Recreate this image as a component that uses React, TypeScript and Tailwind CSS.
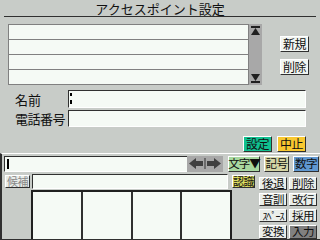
// アクセスポイント設定 画面
import type { ReactNode } from 'react';

const jp = "font-['Noto_Sans_CJK_JP',sans-serif]";

// 3D風のボタン
function Btn({ children, className = '' }: { children: ReactNode; className?: string }) {
  return (
    <div
      className={`flex items-center justify-center whitespace-nowrap border border-t-white border-l-white border-r-[#303030] border-b-[#303030] leading-none tracking-[-0.5px] ${className}`}
    >
      {children}
    </div>
  );
}

function ScrollArrow({ down = false }: { down?: boolean }) {
  return (
    <svg width="13" height="12" viewBox="0 0 13 12">
      {down ? (
        <>
          <polygon points="2,2 11,2 6.5,9" fill="#202020" />
          <rect x="2" y="9" width="9" height="2" fill="#202020" />
        </>
      ) : (
        <>
          <rect x="2" y="1" width="9" height="2" fill="#202020" />
          <polygon points="2,10 11,10 6.5,3" fill="#202020" />
        </>
      )}
    </svg>
  );
}

function CursorArrows() {
  return (
    <svg width="36" height="15" viewBox="0 0 36 15">
      <polygon points="2,7.5 9,2 9,5 16,5 16,10 9,10 9,13" fill="#404040" />
      <rect x="17.5" y="2" width="1" height="11" fill="#303030" />
      <polygon points="34,7.5 27,2 27,5 20,5 20,10 27,10 27,13" fill="#404040" />
    </svg>
  );
}

export default function App() {
  return (
    <div className={`w-[320px] h-[240px] bg-[#c8ccc8] overflow-hidden flex flex-col text-[#101010] ${jp}`}>
      {/* タイトル */}
      <div className="mx-[4px] h-[17px] pt-[1px] border-b border-[#303030] text-center text-[13px] leading-[15px] whitespace-nowrap">
        アクセスポイント設定
      </div>

      {/* リスト + ボタン */}
      <div className="flex mt-[7px] ml-[8px]">
        <div className="w-[241px] h-[61px] border border-[#808080] bg-[#f5faf5] flex flex-col">
          <div className="h-[15px] border-b border-[#808080]" />
          <div className="h-[15px] border-b border-[#808080]" />
          <div className="h-[15px] border-b border-[#808080]" />
          <div className="flex-1" />
        </div>
        <div className="w-[13px] h-[61px] bg-[#a8a8a8] flex flex-col justify-between py-[1px]">
          <ScrollArrow />
          <ScrollArrow down />
        </div>
        <div className="ml-[18px] mt-[12px] flex flex-col gap-[7px]">
          <Btn className="w-[29px] h-[16px] bg-[#f2f6f2] text-[12px]">新規</Btn>
          <Btn className="w-[29px] h-[16px] bg-[#f2f6f2] text-[12px]">削除</Btn>
        </div>
      </div>

      {/* 入力フィールド */}
      <div className="mt-[5px] flex flex-col gap-[2px]">
        <div className="flex items-center h-[18px]">
          <div className="w-[68px] pl-[15px] text-[13px] leading-none">名前</div>
          <div className="w-[238px] h-[18px] bg-[#f5faf5] border border-t-[#303030] border-l-[#303030] border-r-white border-b-white relative">
            <span className="absolute left-[1px] top-[2px] w-[2px] h-[3px] bg-black" />
            <span className="absolute left-[1px] top-[9px] w-[2px] h-[4px] bg-black" />
          </div>
        </div>
        <div className="flex items-center h-[17px]">
          <div className="w-[68px] pl-[15px] text-[13px] leading-none tracking-[-0.5px] whitespace-nowrap">電話番号</div>
          <div className="w-[238px] h-[17px] bg-[#f5faf5] border border-t-[#303030] border-l-[#303030] border-r-white border-b-white" />
        </div>
      </div>

      {/* 設定 / 中止 */}
      <div className="mt-[9px] flex justify-end gap-[5px] pr-[14px]">
        <Btn className="w-[29px] h-[16px] bg-[#10c090] text-[12px]">設定</Btn>
        <Btn className="w-[29px] h-[16px] bg-[#f8c830] text-[12px]">中止</Btn>
      </div>

      {/* 入力パネル */}
      <div className="mt-[1px] flex-1 border-t border-white border-l-2 border-l-[#303030] border-b-2 border-b-[#303030] flex flex-col">
        <div className="flex items-center h-[17px] mt-[1px] ml-[2px]">
          <div className="w-[183px] h-[16px] bg-[#f5faf5] border border-t-[#303030] border-l-[#303030] border-r-0 border-b-white relative">
            <span className="absolute left-[2px] top-[2px] w-[2px] h-[10px] bg-black" />
          </div>
          <div className="w-[36px] h-[16px] bg-[#a8a8a8]">
            <CursorArrows />
          </div>
          <Btn className="ml-[5px] w-[32px] h-[16px] bg-[#a8d8a0] text-[11.5px] tracking-[-1px]">文字▼</Btn>
          <Btn className="ml-[4px] w-[25px] h-[16px] bg-[#d4d4a4] text-[11.5px]">記号</Btn>
          <Btn className="ml-[4px] w-[26px] h-[16px] bg-[#6098d0] text-[11.5px]">数字</Btn>
        </div>

        <div className="flex flex-1">
          {/* 左側 */}
          <div className="flex flex-col w-[257px]">
            <div className="flex items-center h-[17px] mt-[1px]">
              <Btn className="ml-[3px] w-[25px] h-[13px] bg-[#e8ece8] text-[#888] text-[11px]">候補</Btn>
              <div className="ml-[2px] w-[196px] h-[15px] bg-[#f5faf5] border border-t-[#303030] border-l-[#303030] border-r-white border-b-white" />
              <Btn className="ml-[4px] w-[23px] h-[13px] bg-[#dcdc60] text-[11px]">認識</Btn>
            </div>
            <div className="ml-[29px] w-[201px] flex-1 bg-[#f5faf5] border-l-2 border-t-2 border-r-2 border-[#202020] flex">
              <div className="flex-1 border-r-2 border-[#303030]" />
              <div className="flex-1 border-r-2 border-[#303030]" />
              <div className="flex-1 border-r-2 border-[#303030]" />
              <div className="flex-1" />
            </div>
          </div>

          {/* 右側のボタン */}
          <div className="grid grid-cols-[28px_28px] gap-x-[2px] gap-y-[3px] mt-[5px] content-start text-[11.5px]">
            <Btn className="w-[28px] h-[13px] bg-[#eaeeea]">後退</Btn>
            <Btn className="w-[28px] h-[13px] bg-[#eaeeea]">削除</Btn>
            <Btn className="w-[28px] h-[13px] bg-[#eaeeea]">音訓</Btn>
            <Btn className="w-[28px] h-[13px] bg-[#eaeeea]">改行</Btn>
            <Btn className="w-[28px] h-[13px] bg-[#eaeeea] text-[10px] tracking-[-1px]">ｽﾍﾟｰｽ</Btn>
            <Btn className="w-[28px] h-[13px] bg-[#eaeeea]">採用</Btn>
            <Btn className="w-[28px] h-[14px] bg-[#eaeeea]">変換</Btn>
            <Btn className="w-[28px] h-[14px] bg-[#808080]">入力</Btn>
          </div>
        </div>
      </div>
    </div>
  );
}
